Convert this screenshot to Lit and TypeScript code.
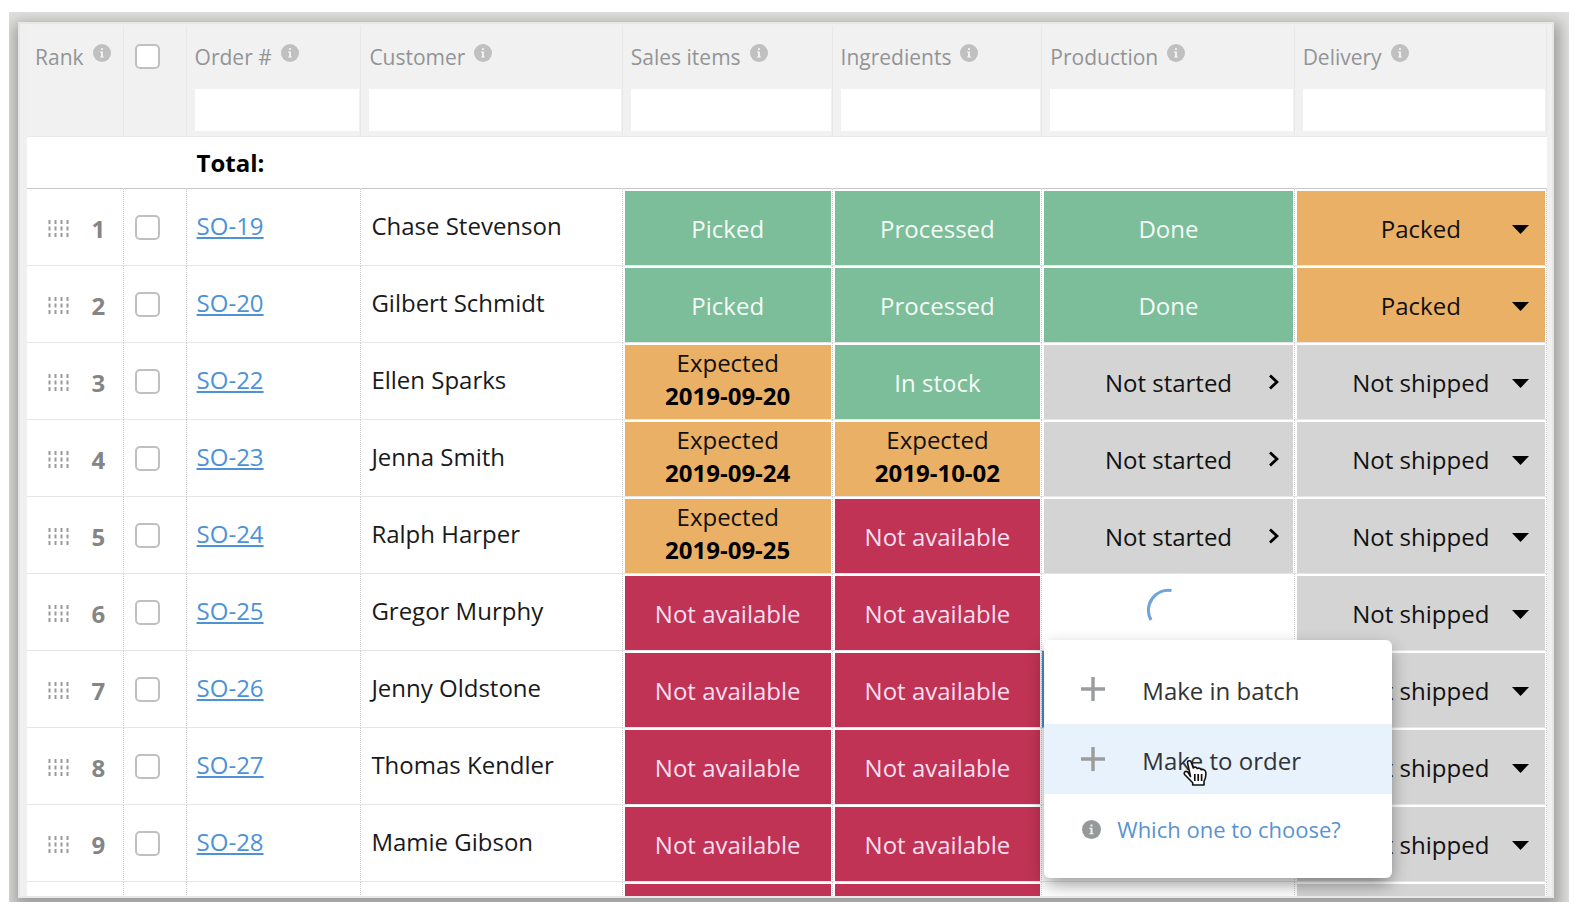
import { LitElement, html, css, svg, nothing } from "lit";
import { customElement, property } from "lit/decorators.js";

type Tone = "ok" | "wait" | "bad";
interface Status { tone: Tone; label: string; date?: string }
interface Order {
  rank: number;
  id: string;
  customer: string;
  sales: Status;
  ingredients: Status;
  production: "done" | "idle" | "loading" | "focused" | "empty";
  delivery: "Packed" | "Not shipped";
}

const ok = (label: string): Status => ({ tone: "ok", label });
const expected = (date: string): Status => ({ tone: "wait", label: "Expected", date });
const missing: Status = { tone: "bad", label: "Not available" };

const ORDERS: Order[] = [
  { rank: 1, id: "SO-19", customer: "Chase Stevenson", sales: ok("Picked"), ingredients: ok("Processed"), production: "done", delivery: "Packed" },
  { rank: 2, id: "SO-20", customer: "Gilbert Schmidt", sales: ok("Picked"), ingredients: ok("Processed"), production: "done", delivery: "Packed" },
  { rank: 3, id: "SO-22", customer: "Ellen Sparks", sales: expected("2019-09-20"), ingredients: ok("In stock"), production: "idle", delivery: "Not shipped" },
  { rank: 4, id: "SO-23", customer: "Jenna Smith", sales: expected("2019-09-24"), ingredients: expected("2019-10-02"), production: "idle", delivery: "Not shipped" },
  { rank: 5, id: "SO-24", customer: "Ralph Harper", sales: expected("2019-09-25"), ingredients: missing, production: "idle", delivery: "Not shipped" },
  { rank: 6, id: "SO-25", customer: "Gregor Murphy", sales: missing, ingredients: missing, production: "loading", delivery: "Not shipped" },
  { rank: 7, id: "SO-26", customer: "Jenny Oldstone", sales: missing, ingredients: missing, production: "focused", delivery: "Not shipped" },
  { rank: 8, id: "SO-27", customer: "Thomas Kendler", sales: missing, ingredients: missing, production: "empty", delivery: "Not shipped" },
  { rank: 9, id: "SO-28", customer: "Mamie Gibson", sales: missing, ingredients: missing, production: "empty", delivery: "Not shipped" },
];

const infoIcon = html`<svg class="info" viewBox="0 0 18 18" aria-hidden="true">
  ${svg`<circle cx="9" cy="9" r="9" fill="currentColor"/><path d="M7 7.4h2.9v5h1v1.2H7.1v-1.2h1V8.6H7zM8 4.2h1.9v1.9H8z" fill="#fff" fill-opacity=".85"/>`}
</svg>`;

const plusIcon = html`<svg class="plus" viewBox="0 0 26 26" aria-hidden="true">
  ${svg`<path d="M13 1v24M1 13h24" stroke="#9a9c9e" stroke-width="3.4" fill="none"/>`}
</svg>`;

@customElement("make-menu")
export class MakeMenu extends LitElement {
  static styles = css`
    :host { display: block; }
    .menu {
      box-sizing: border-box;
      width: 348px;
      padding: 14px 0;
      border-radius: 6px;
      background: #fff;
      box-shadow: 0 7px 18px -2px rgba(0, 0, 0, 0.45);
    }
    .item {
      display: flex;
      align-items: center;
      box-sizing: border-box;
      width: 100%;
      height: 70px;
      margin: 0;
      padding: 0 36px;
      border: 0;
      background: none;
      color: #333;
      font: 24px/32px "Open Sans", sans-serif;
      text-align: left;
      text-decoration: none;
      cursor: pointer;
    }
    .label { padding-top: 3px; }
    .hover { background: #e8f2fc; position: relative; }
    .plus { width: 26px; height: 26px; margin-right: 36px; flex: none; }
    .help { color: #5a93cf; font-size: 22px; padding-left: 38px; }
    .info { width: 19px; height: 19px; margin-right: 16px; flex: none; color: #96999a; }
    .cursor { position: absolute; left: 138px; top: 34px; width: 26px; height: 30px; }
  `;
  render() {
    return html`<div class="menu" role="menu">
      <button class="item" role="menuitem">${plusIcon}<span class="label">Make in batch</span></button>
      <button class="item hover" role="menuitem">${plusIcon}<span class="label">Make to order</span>
        <svg class="cursor" viewBox="0 0 26 30" aria-hidden="true">
          ${svg`<path d="M8.5 18.5 5.6 5.2C5 2.6 8.300 1.800 9.200 4.200L11.300 10C12.200 8.600 14.600 8.900 15.200 10.600 16.600 9.600 18.600 10.200 19.200 11.700 21.200 10.900 23.500 12 23.800 14.300 24.200 18 23.500 20.500 22 23.500V27H10.700V24.700L2.800 16.700C1 14.300 3.800 12.400 5.900 14.200Z" fill="#fff" stroke="#111" stroke-width="1.600" stroke-linejoin="round"/><path d="M12.800 16v7M16.200 16v7M19.600 16v7" stroke="#111" stroke-width="1.700"/>`}
        </svg>
      </button>
      <a class="item help" href="#help">${infoIcon}Which one to choose?</a>
    </div>`;
  }
}

@customElement("status-cell")
export class StatusCell extends LitElement {
  @property({ attribute: false }) status?: Status;
  static styles = css`
    :host { display: block; height: 100%; }
    .status {
      display: flex;
      flex-direction: column;
      align-items: center;
      justify-content: center;
      box-sizing: border-box;
      height: 74px;
      line-height: 33px;
    }
    .ok { background: #7cbd9a; color: #f4fbf7; }
    .wait { background: #eab066; color: #111; padding-bottom: 7px; }
    .bad { background: #c03355; color: #f8dff0; }
    .date { color: #000; font-weight: 700; }
  `;
  render() {
    const s = this.status;
    if (!s) return nothing;
    return html`<div class="status ${s.tone}">
      <span>${s.label}</span>${s.date ? html`<span class="date">${s.date}</span>` : nothing}
    </div>`;
  }
}

@customElement("app-root")
export class AppRoot extends LitElement {
  static styles = css`
    :host {
      display: flex;
      box-sizing: border-box;
      height: 100vh;
      padding: 12px 15px 14px 9px;
      background: #fff;
      color: #1a1a1a;
      font: 24px/33px "Open Sans", sans-serif;
    }
    .frame {
      display: flex;
      flex: 1;
      min-width: 0;
      box-sizing: border-box;
      padding: 10px 15px 4px 9px;
      overflow: hidden;
      background: #e0e0de;
    }
    .card {
      flex: 1;
      min-width: 0;
      box-sizing: border-box;
      padding: 2px 5px 0 7px;
      border: 2px solid #e6e8e8;
      background: #f0f0f0;
      box-shadow: 1px 6px 14px 5px rgba(0, 0, 0, 0.3);
      overflow: hidden;
    }
    table {
      width: 100%;
      table-layout: fixed;
      border-collapse: separate;
      border-spacing: 0;
      background: #fff;
    }
    .c-rank { width: 6.4%; }
    .c-check { width: 4.1%; }
    .c-order { width: 11.5%; }
    .c-customer { width: 17.2%; }
    .c-sales { width: 13.8%; }
    .c-ingredients { width: 13.8%; }
    .c-production { width: 16.6%; }
    .c-delivery { width: 16.6%; }

    th {
      box-sizing: border-box;
      height: 111px;
      padding: 13px 1px 0 8px;
      border-right: 1px solid #e8e8e8;
      border-bottom: 1px solid #e8e8e8;
      background: #f1f1f1;
      color: #929497;
      font-size: 21px;
      font-weight: 400;
      line-height: 36px;
      text-align: left;
      vertical-align: top;
      white-space: nowrap;
    }
    .title { display: flex; align-items: center; gap: 9px; }
    .info { width: 18px; height: 18px; margin-bottom: 8px; flex: none; color: #c0c0c0; }
    .filter {
      display: block;
      box-sizing: border-box;
      width: 100%;
      height: 42px;
      margin: 14px 0 0;
      padding: 0 8px;
      border: 0;
      background: #fff;
      font: inherit;
    }
    .tick {
      appearance: none;
      display: block;
      box-sizing: border-box;
      width: 25px;
      height: 25px;
      margin: 0 0 0 11px;
      border: 2px solid #c0c0c0;
      border-radius: 5px;
      background: #fff;
    }
    th .tick { margin: 5px 0 0 3px; }

    td {
      box-sizing: border-box;
      height: 77px;
      padding: 0;
      border-right: 1px dotted #ccc;
      border-bottom: 1px solid #e6e6e6;
      white-space: nowrap;
    }
    .total td {
      height: 52px;
      border-right-color: transparent;
      border-bottom-color: #c8c8c8;
      color: #000;
      font-weight: 700;
    }
    td.order { padding: 0 0 3px 10px; }
    .total td.order { padding-bottom: 0; }
    td.customer { padding: 0 0 3px 10px; }
    td.state { padding: 2px 1px 0 2px; vertical-align: top; }
    td.production { position: relative; }
    td.focused { border-left: 2px solid #4d90d0; }
    a { color: #4d92d6; }
    .rank { display: flex; align-items: center; justify-content: space-between; padding: 3px 18px 0 21px; }
    .grip { width: 21px; height: 18px; }
    .number { color: #858585; font-weight: 700; }

    .done, .idle, .select {
      box-sizing: border-box;
      width: 100%;
      height: 74px;
      margin: 0;
      border: 0;
      border-radius: 0;
      font: inherit;
    }
    .done { display: grid; place-items: center; background: #7cbd9a; color: #f4fbf7; }
    .idle {
      display: grid;
      grid-template-columns: 1fr auto 1fr;
      align-items: center;
      padding: 0 14px;
      background: #d4d4d4;
      color: #111;
    }
    .chevron { grid-column: 3; justify-self: end; width: 11px; height: 16px; }
    .idle span { grid-column: 2; }
    .loading { display: grid; justify-content: center; padding-top: 12px; }
    .spinner { width: 44px; height: 44px; }
    make-menu { position: absolute; left: 2px; top: 66px; z-index: 2; }
    .delivery { position: relative; height: 74px; background: #d4d4d4; }
    .packed { background: #eab066; }
    .select {
      display: block;
      appearance: none;
      padding: 0;
      background: none;
      color: #111;
      text-align: center;
      text-align-last: center;
    }
    .caret { position: absolute; right: 16px; top: 34px; width: 17px; height: 9px; pointer-events: none; }
    .bar { height: 74px; }
    .bar.bad { background: #c03355; }
    .bar.idle-bar { background: #d4d4d4; }
  `;

  private production(o: Order) {
    if (o.production === "done") return html`<div class="done">Done</div>`;
    if (o.production === "idle")
      return html`<button class="idle"><span>Not started</span>
        <svg class="chevron" viewBox="0 0 11 16" aria-hidden="true">${svg`<path d="M2 1.500l7 6.500L2 14.500" fill="none" stroke="#000" stroke-width="2.800"/>`}</svg></button>`;
    if (o.production === "loading")
      return html`<div class="loading">
          <svg class="spinner" viewBox="0 0 44 44" aria-label="Loading">${svg`<path d="M25.500 2.500A20 20 0 0 0 5 32" fill="none" stroke="#6ea3dc" stroke-width="3.200"/>`}</svg>
        </div><make-menu></make-menu>`;
    return nothing;
  }

  private heading(label: string) {
    const id = "f-" + label.toLowerCase().replace(/[^a-z]/g, "");
    return html`<th scope="col">
      <label class="title" for=${id}>${label}${infoIcon}</label>
      <input class="filter" id=${id} type="text" />
    </th>`;
  }

  private row(o: Order) {
    return html`<tr>
      <td><div class="rank">
        <svg class="grip" viewBox="0 0 21 18" aria-hidden="true">${svg`<path d="M1.500 0v18M7.500 0v18M13.500 0v18M19.500 0v18" stroke="#9a9a9a" stroke-width="2" stroke-dasharray="4 2.500"/>`}</svg>
        <span class="number">${o.rank}</span></div></td>
      <td><input class="tick" type="checkbox" aria-label="Select ${o.id}" /></td>
      <td class="order"><a href="#${o.id}">${o.id}</a></td>
      <td class="customer">${o.customer}</td>
      <td class="state"><status-cell .status=${o.sales}></status-cell></td>
      <td class="state"><status-cell .status=${o.ingredients}></status-cell></td>
      <td class="state production ${o.production === "focused" ? "focused" : ""}">${this.production(o)}</td>
      <td class="state"><div class="delivery ${o.delivery === "Packed" ? "packed" : ""}">
        <select class="select" aria-label="Delivery of ${o.id}"><option>${o.delivery}</option></select>
        <svg class="caret" viewBox="0 0 17 9" aria-hidden="true">${svg`<path d="M0 0h17L8.500 9z" fill="#000"/>`}</svg>
      </div></td>
    </tr>`;
  }

  render() {
    return html`<div class="frame"><main class="card"><table>
      <colgroup>
        <col class="c-rank" /><col class="c-check" /><col class="c-order" /><col class="c-customer" />
        <col class="c-sales" /><col class="c-ingredients" /><col class="c-production" /><col class="c-delivery" />
      </colgroup>
      <thead><tr>
        <th scope="col"><div class="title">Rank${infoIcon}</div></th>
        <th scope="col"><input class="tick" type="checkbox" aria-label="Select all" /></th>
        ${["Order #", "Customer", "Sales items", "Ingredients", "Production", "Delivery"].map((h) => this.heading(h))}
      </tr></thead>
      <tbody>
        <tr class="total"><td></td><td></td><td class="order">Total:</td><td></td><td></td><td></td><td></td><td></td></tr>
        ${ORDERS.map((o) => this.row(o))}
        <tr><td></td><td></td><td></td><td></td>
          <td class="state"><div class="bar bad"></div></td>
          <td class="state"><div class="bar bad"></div></td>
          <td></td>
          <td class="state"><div class="bar idle-bar"></div></td></tr>
      </tbody>
    </table></main></div>`;
  }
}
